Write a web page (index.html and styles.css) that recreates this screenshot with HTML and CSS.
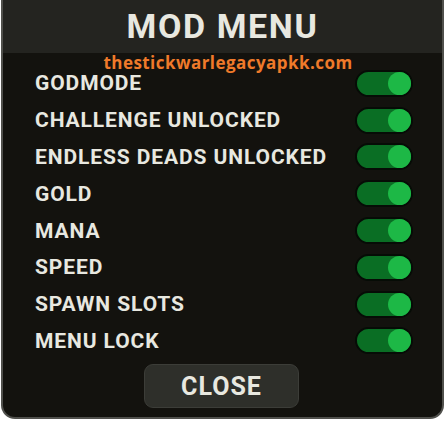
FILE: index.html
```html
<!DOCTYPE html>
<html lang="en">
    <head>
        <meta charset="UTF-8">
        <meta name="viewport" content="width=device-width, initial-scale=1.0">
        <title>Mod Menu</title>
        <link rel="stylesheet" href="styles.css">
    </head>
    <body>
        <div class="panel">
            <div class="header">MOD MENU</div>
            <div class="content">
                <div class="site">thestickwarlegacyapkk.com</div>
                <div class="options">
                    <div class="option"><span>GODMODE</span><div class="toggle"><div class="knob"></div></div></div>
                    <div class="option"><span>CHALLENGE UNLOCKED</span><div class="toggle"><div class="knob"></div></div></div>
                    <div class="option"><span>ENDLESS DEADS UNLOCKED</span><div class="toggle"><div class="knob"></div></div></div>
                    <div class="option"><span>GOLD</span><div class="toggle"><div class="knob"></div></div></div>
                    <div class="option"><span>MANA</span><div class="toggle"><div class="knob"></div></div></div>
                    <div class="option"><span>SPEED</span><div class="toggle"><div class="knob"></div></div></div>
                    <div class="option"><span>SPAWN SLOTS</span><div class="toggle"><div class="knob"></div></div></div>
                    <div class="option"><span>MENU LOCK</span><div class="toggle"><div class="knob"></div></div></div>
                </div>
                <div class="footer">
                    <button class="close">CLOSE</button>
                </div>
            </div>
        </div>
    </body>
</html>
```

FILE: styles.css
```css
:root {
    --header-bg: rgb(36, 36, 32);
    --body-bg: rgb(19, 18, 14);
    --text: rgb(232, 232, 224);
    --orange: rgb(240, 122, 42);
    --track: rgb(10, 110, 36);
    --knob: rgb(29, 184, 70);
}

body {
    margin: 0;
    background: #fff;
    font-family: Roboto, "Liberation Sans", sans-serif;
}

.panel {
    width: 439px;
    height: 417px;
    margin: 0 0 0 1px;
    border: 2px solid rgb(80, 80, 76);
    border-top: none;
    border-radius: 0 0 14px 14px;
    background: var(--body-bg);
    overflow: hidden;
    display: flex;
    flex-direction: column;
}

.header {
    height: 53px;
    background: var(--header-bg);
    color: var(--text);
    font-size: 34px;
    font-weight: 700;
    letter-spacing: 1.6px;
    text-align: center;
    line-height: 53px;
}

.content {
    flex: 1;
    display: flex;
    flex-direction: column;
}

.site {
    color: var(--orange);
    font-family: "Open Sans", sans-serif;
    font-weight: 700;
    font-size: 17px;
    letter-spacing: 0.45px;
    text-align: center;
    line-height: 18px;
    margin-top: 1px;
    margin-bottom: -7px;
    padding-left: 11px;
}

.options {
    display: flex;
    flex-direction: column;
    padding: 0 29px 0 32px;
}

.option {
    height: 36.8px;
    display: flex;
    align-items: center;
    justify-content: space-between;
    color: var(--text);
    font-size: 21px;
    font-weight: 700;
    letter-spacing: 0.9px;
}

.toggle {
    width: 54px;
    height: 23px;
    border: 2px solid rgb(6, 12, 6);
    border-radius: 14px;
    background: var(--track);
    display: flex;
    justify-content: flex-end;
}

.knob {
    width: 23px;
    height: 23px;
    border-radius: 50%;
    background: var(--knob);
}

.footer {
    display: flex;
    justify-content: center;
    margin-top: 5px;
}

.close {
    width: 155px;
    height: 44px;
    margin-right: 2px;
    background: rgb(46, 47, 42);
    border: 1px solid rgb(60, 61, 56);
    border-radius: 9px;
    color: var(--text);
    font-family: Roboto, "Liberation Sans", sans-serif;
    font-size: 25px;
    font-weight: 700;
    letter-spacing: 1px;
}
```
